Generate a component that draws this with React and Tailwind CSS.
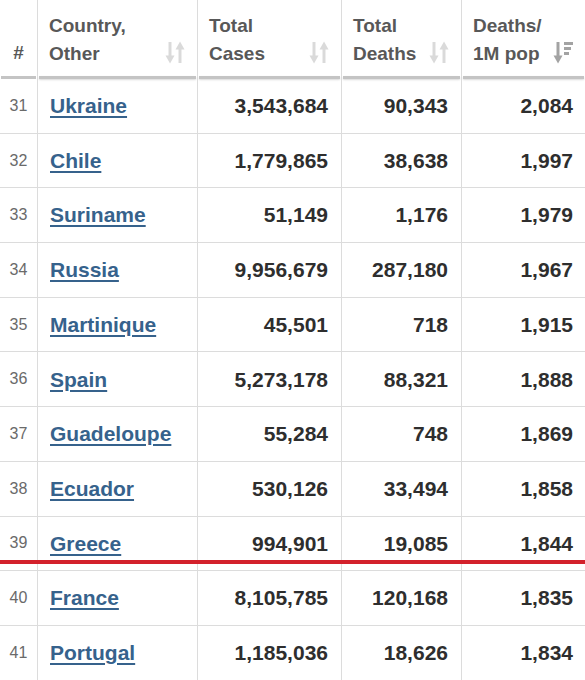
const rows = [
  { n: 31, country: 'Ukraine', cases: '3,543,684', deaths: '90,343', perM: '2,084' },
  { n: 32, country: 'Chile', cases: '1,779,865', deaths: '38,638', perM: '1,997' },
  { n: 33, country: 'Suriname', cases: '51,149', deaths: '1,176', perM: '1,979' },
  { n: 34, country: 'Russia', cases: '9,956,679', deaths: '287,180', perM: '1,967' },
  { n: 35, country: 'Martinique', cases: '45,501', deaths: '718', perM: '1,915' },
  { n: 36, country: 'Spain', cases: '5,273,178', deaths: '88,321', perM: '1,888' },
  { n: 37, country: 'Guadeloupe', cases: '55,284', deaths: '748', perM: '1,869' },
  { n: 38, country: 'Ecuador', cases: '530,126', deaths: '33,494', perM: '1,858' },
  { n: 39, country: 'Greece', cases: '994,901', deaths: '19,085', perM: '1,844', cut: true },
  { n: 40, country: 'France', cases: '8,105,785', deaths: '120,168', perM: '1,835' },
  { n: 41, country: 'Portugal', cases: '1,185,036', deaths: '18,626', perM: '1,834' },
];

const GRID = 'grid grid-cols-[38px_160px_144px_120px_1fr]';

function SortIcon({ active }) {
  if (active) {
    return (
      <svg width="20" height="23" viewBox="0 0 20 23" className="shrink-0">
        <path d="M5 1v15" stroke="#a3a3a3" strokeWidth="3" />
        <path d="M0.5 14.5l4.5 8 4.5-8z" fill="#a3a3a3" />
        <rect x="11" y="1" width="9" height="3" fill="#a3a3a3" />
        <rect x="11" y="6" width="7" height="3" fill="#a3a3a3" />
        <rect x="11" y="11" width="5" height="3" fill="#a3a3a3" />
      </svg>
    );
  }
  return (
    <svg width="20" height="23" viewBox="0 0 20 23" className="shrink-0">
      <path d="M5 1v15" stroke="#dadada" strokeWidth="3" />
      <path d="M0.5 14.5l4.5 8 4.5-8z" fill="#dadada" />
      <path d="M15 7v15" stroke="#dadada" strokeWidth="3" />
      <path d="M10.5 8.5l4.5-8 4.5 8z" fill="#dadada" />
    </svg>
  );
}

function HeadCell({ lines, icon, active, last }) {
  return (
    <div className={`flex flex-col h-full ${last ? '' : 'border-r border-[#dcdcdc]'}`}>
      <div className="flex-1 flex items-end justify-between pl-[11px] pr-[12px] pb-[8px]">
        <div className="text-[19px] leading-[28px] font-bold text-[#585858]">
          {lines.map((l) => (
            <div key={l}>{l}</div>
          ))}
        </div>
        {icon && (
          <div className="mb-[4px]">
            <SortIcon active={active} />
          </div>
        )}
      </div>
      <div className="h-[3px] mx-px bg-[#c4c4c4] shadow-[0_1px_2px_rgba(0,0,0,0.15)]" />
    </div>
  );
}

export default function App() {
  return (
    <div
      className="w-[585px] h-[680px] overflow-hidden bg-white"
      style={{ fontFamily: '"Liberation Sans", Arial, sans-serif' }}
    >
      <div className={`${GRID} h-[79px]`}>
        <div className="flex flex-col h-full border-r border-[#dcdcdc]">
          <div className="flex-1 flex items-end justify-center pb-[9px] text-[19px] leading-[28px] font-bold text-[#585858]">
            #
          </div>
          <div className="h-[3px] mx-px bg-[#c4c4c4]" />
        </div>
        <HeadCell lines={['Country,', 'Other']} icon />
        <HeadCell lines={['Total', 'Cases']} icon />
        <HeadCell lines={['Total', 'Deaths']} icon />
        <HeadCell lines={['Deaths/', '1M pop']} icon active last />
      </div>

      {rows.map((r) => (
        <div key={r.n} className={`${GRID} h-[54.7px] border-b border-[#dcdcdc] relative`}>
          <div className="flex items-center justify-center border-r border-[#dcdcdc] text-[16px] text-[#6a6a6a]">
            {r.n}
          </div>
          <div className="flex items-center pl-[12px] border-r border-[#dcdcdc]">
            <a className="text-[21px] font-bold text-[#36628c] underline underline-offset-[3px] decoration-[2px]">
              {r.country}
            </a>
          </div>
          <div className="flex items-center justify-end pr-[13px] border-r border-[#dcdcdc] text-[21px] font-bold text-[#2e2e2e]">
            {r.cases}
          </div>
          <div className="flex items-center justify-end pr-[13px] border-r border-[#dcdcdc] text-[21px] font-bold text-[#2e2e2e]">
            {r.deaths}
          </div>
          <div className="flex items-center justify-end pr-[12px] text-[21px] font-bold text-[#2e2e2e]">
            {r.perM}
          </div>
          {r.cut && <div className="absolute left-0 right-0 bottom-[6px] h-[4px] bg-[#d3212b]" />}
        </div>
      ))}
    </div>
  );
}
